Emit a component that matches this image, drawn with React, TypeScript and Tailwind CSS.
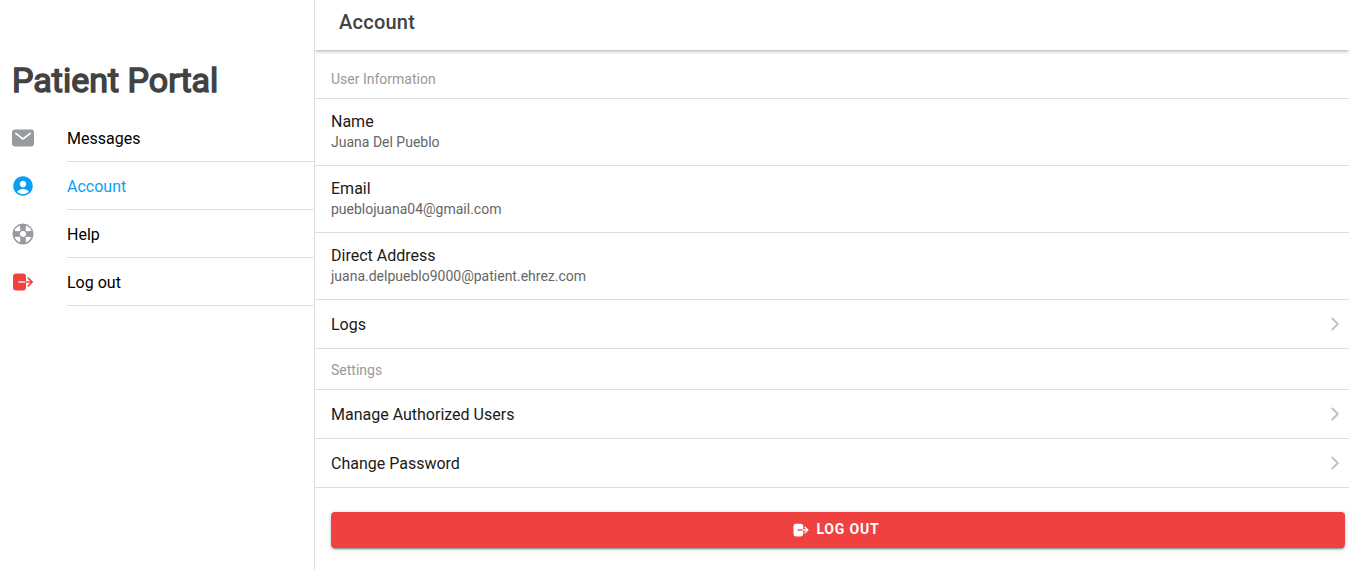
// Patient portal — account page
// Side menu on the left, account details and settings on the right

import type { ComponentType } from 'react';
import { IoChevronForward, IoHelpBuoy, IoPersonCircle } from 'react-icons/io5';

interface IconProps {
  className?: string;
}

interface MenuItem {
  label:      string;
  href:       string;
  icon:       ComponentType<IconProps>;
  iconClass:  string;
  active?:    boolean;
}

function MailIcon({ className }: IconProps) {
  return (
    <svg viewBox="0 0 24 24" className={className} aria-hidden="true">
      <rect x="1" y="3.5" width="22" height="17" rx="3.2" fill="currentColor" />
      <path d="M4.8 7.4 12 13l7.2-5.6" fill="none" stroke="white" strokeWidth="1.7"
        strokeLinecap="round" strokeLinejoin="round" />
    </svg>
  );
}

function LogOutIcon({ className }: IconProps) {
  return (
    <svg viewBox="0 0 24 24" className={className} aria-hidden="true">
      <rect x="2" y="3.5" width="13" height="17" rx="3.2" fill="currentColor" />
      <path d="M8 12h7" fill="none" stroke="white" strokeOpacity="0.85" strokeWidth="1.7"
        strokeLinecap="round" className="[.on-solid_&]:stroke-[#f04141]" />
      <path d="M15 12h6M17.2 8.2 21.2 12l-4 3.8" fill="none" stroke="currentColor"
        strokeWidth="1.7" strokeLinecap="round" strokeLinejoin="round" />
    </svg>
  );
}

const MENU: MenuItem[] = [
  { label: 'Messages', href: '#messages', icon: MailIcon,       iconClass: 'text-[#989aa2]' },
  { label: 'Account',  href: '#account',  icon: IoPersonCircle, iconClass: 'text-[#0a9ff5]', active: true },
  { label: 'Help',     href: '#help',     icon: IoHelpBuoy,     iconClass: 'text-[#989aa2]' },
  { label: 'Log out',  href: '#logout',   icon: LogOutIcon,     iconClass: 'text-[#f04141]' },
];

const USER_INFO = [
  { label: 'Name',           value: 'Juana Del Pueblo' },
  { label: 'Email',          value: 'pueblojuana04@gmail.com' },
  { label: 'Direct Address', value: 'juana.delpueblo9000@patient.ehrez.com' },
];

function SideMenu() {
  return (
    <aside className="w-[315px] shrink-0 border-r border-[#dedede] pl-3">
      <h1 className="pt-[58px] pb-3 text-[34px] leading-[44px] font-normal text-[#424242] [-webkit-text-stroke:1.5px_#424242]">
        Patient Portal
      </h1>
      <nav>
        {MENU.map(({ label, href, icon: Icon, iconClass, active }) => (
          <a key={label} href={href} className="flex items-center"
            aria-current={active ? 'page' : undefined}>
            <Icon className={`-ml-px mr-8 size-6 shrink-0 ${iconClass}`} />
            <span className={`flex-1 border-b border-[#dedede] pt-[13px] pb-[11px] text-base leading-[23px] ${
              active ? 'text-[#0a9ff5]' : 'text-black'
            }`}>
              {label}
            </span>
          </a>
        ))}
      </nav>
    </aside>
  );
}

function ListHeader({ children }: { children: string }) {
  return (
    <h3 className="border-b border-[#dedede] px-4 pt-[11px] pb-[9px] text-sm leading-5 text-[#999]">
      {children}
    </h3>
  );
}

function LinkRow({ label, href }: { label: string; href: string }) {
  return (
    <a href={href}
      className="flex items-center justify-between border-b border-[#dedede] pl-4 pr-1 text-base text-[#1a1a1a]">
      <span className="pt-[13px] pb-[11px]">{label}</span>
      <IoChevronForward className="size-5 text-[#bfbfbf]" />
    </a>
  );
}

export default function App() {
  return (
    <div className="flex min-h-screen bg-white font-['Roboto',sans-serif]">
      <SideMenu />

      <div className="min-w-0 flex-1 overflow-hidden">
        <header className="px-6 pt-2 pb-3.5 shadow-[0_1px_4px_rgba(0,0,0,0.35)]">
          <h2 className="text-xl leading-7 font-medium tracking-[0.0125em] text-[#424242]">Account</h2>
        </header>

        <main className="pt-2">
          <section>
            <ListHeader>User Information</ListHeader>
            <dl>
              {USER_INFO.map((row) => (
                <div key={row.label} className="border-b border-[#dedede] px-4 py-3">
                  <dt className="text-base leading-[21px] text-[#1a1a1a]">{row.label}</dt>
                  <dd className="text-sm leading-[21px] text-[#666]">{row.value}</dd>
                </div>
              ))}
            </dl>
            <LinkRow label="Logs" href="#logs" />
          </section>

          <section>
            <ListHeader>Settings</ListHeader>
            <LinkRow label="Manage Authorized Users" href="#authorized-users" />
            <LinkRow label="Change Password" href="#password" />
          </section>

          <div className="pt-6 pb-5 pl-4 pr-1">
            <button type="button"
              className="on-solid flex h-9 w-full items-center justify-center gap-1.5 rounded bg-[#f04141] pr-1 text-sm font-bold tracking-[0.06em] text-white uppercase shadow-[0_2px_2px_-1px_rgba(0,0,0,0.4),0_1px_4px_rgba(0,0,0,0.2)]">
              <LogOutIcon className="size-[18px]" />
              <span className="pb-0.5">Log out</span>
            </button>
          </div>
        </main>
      </div>
    </div>
  );
}
